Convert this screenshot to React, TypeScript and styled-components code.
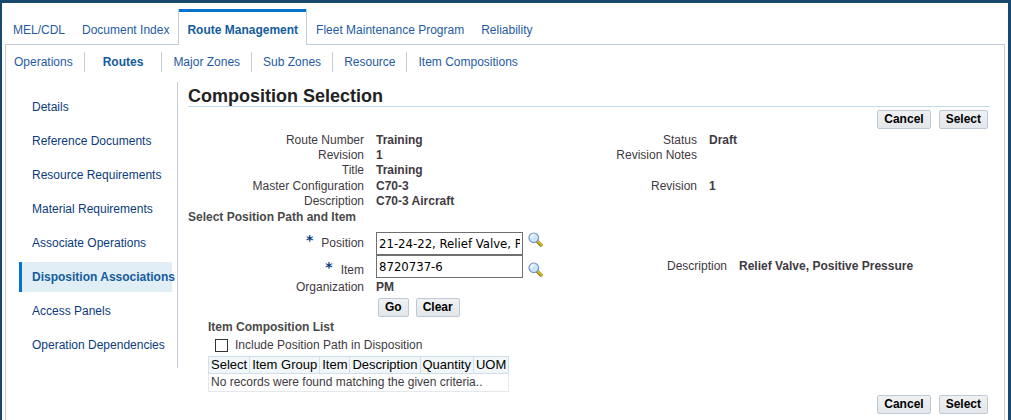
import React, { useState } from 'react';
import styled, { createGlobalStyle } from 'styled-components';

const color = {
  frame: '#17486d',
  line: '#c3cdd9',
  rule: '#c5d9e6',
  link: '#1f5ba3',
  linkActive: '#145c9e',
  sideLink: '#0b3b7c',
  accent: '#0572ce',
  text: '#3f3a42',
};

const GlobalStyle = createGlobalStyle`
  *, *::before, *::after { box-sizing: border-box; }
  body {
    margin: 0;
    background: #fff;
    color: ${color.text};
    font: 12px/15px "Liberation Sans", Arial, sans-serif;
  }
  a { text-decoration: none; }
`;

const Frame = styled.div`
  display: flex;
  flex-direction: column;
  min-height: 100vh;
  padding: 6px 3px 0;
  border: solid ${color.frame};
  border-width: 3px 3px 0 2px;
`;

const TabBar = styled.nav`
  display: flex;
  gap: 1px;
  height: 36px;
  margin-bottom: -1px;
`;

const Tab = styled.a<{ $active?: boolean }>`
  position: relative;
  display: flex;
  align-items: center;
  padding: 6px 8px 0;
  border: solid ${p => (p.$active ? color.line : 'transparent')};
  border-width: 0 ${p => (p.$active ? '1px' : '0')};
  background: ${p => (p.$active ? '#fff' : 'transparent')};
  color: ${p => (p.$active ? color.linkActive : color.link)};
  font-weight: ${p => (p.$active ? 700 : 400)};
  box-shadow: ${p => (p.$active ? `inset 0 3px ${color.accent}` : 'none')};
`;

const Panel = styled.div`
  flex: 1;
  border: solid ${color.line};
  border-width: 1px 1px 0;
`;

const SubTabBar = styled.nav`
  display: flex;
  height: 20px;
  margin: 7px 0 10px;
`;

const SubTab = styled.a<{ $active?: boolean }>`
  display: flex;
  align-items: center;
  padding: 0 ${p => (p.$active ? '18px' : '11px')};
  border-right: 1px solid ${color.line};
  color: ${p => (p.$active ? color.linkActive : color.link)};
  font-weight: ${p => (p.$active ? 700 : 400)};

  &:first-child { padding-left: 8px; }
  &:last-child { border-right: 0; }
`;

const Body = styled.div`
  display: flex;
  align-items: flex-start;
`;

const SideNav = styled.nav`
  display: flex;
  flex: none;
  flex-direction: column;
  gap: 4px;
  width: 172px;
  padding: 10px 5px 8px 13px;
  border-right: 1px solid ${color.line};
`;

const SideLink = styled.a<{ $active?: boolean }>`
  display: flex;
  align-items: center;
  height: 30px;
  padding-left: 10px;
  border-left: 3px solid ${p => (p.$active ? color.accent : 'transparent')};
  background: ${p => (p.$active ? '#e1eef6' : 'transparent')};
  color: ${p => (p.$active ? color.linkActive : color.sideLink)};
  font-weight: ${p => (p.$active ? 700 : 400)};
  white-space: nowrap;
`;

const Main = styled.main`
  flex: 1;
  min-width: 0;
  padding: 4px 14px 0 10px;
`;

const Title = styled.h1`
  margin: 0 0 3px;
  border-bottom: 1px solid ${color.rule};
  color: #222;
  font-size: 18px;
  line-height: 20px;
`;

const PageActions = styled.div`
  display: flex;
  justify-content: flex-end;
  gap: 8px;
  padding-right: 2px;
`;

const Button = styled.button`
  height: 19px;
  padding: 0 6px;
  border: 1px solid #bdcad6;
  border-radius: 2px;
  background: linear-gradient(#eff1f3, #e3e7ea);
  color: #000;
  font: bold 12px/15px "Liberation Sans", Arial, sans-serif;
`;

const Facts = styled.dl`
  display: grid;
  grid-template-columns: 176px 209px 100px 1fr;
  grid-template-rows: 15px 15px 16px 15px 15px;
  column-gap: 12px;
  margin: 4px 0 1px;
`;

const Term = styled.dt`
  grid-column: 1;
  text-align: right;
`;

const Detail = styled.dd`
  grid-column: 2;
  margin: 0;
  font-weight: 700;
`;

const SideTerm = styled(Term)`
  grid-column: 3;
`;

const SideDetail = styled(Detail)`
  grid-column: 4;
`;

const SectionTitle = styled.h2`
  margin: 0;
  color: #4a4a4a;
  font-size: 12px;
  line-height: 15px;
`;

const Form = styled.form`
  margin-top: 7px;
`;

type Align = 'start' | 'center' | 'end';

const FormRow = styled.div<{ $height: number }>`
  display: grid;
  grid-template-columns: 176px 239px 100px 1fr;
  column-gap: 12px;
  align-items: center;
  height: ${p => p.$height}px;
`;

const FieldLabel = styled.label<{ $align?: Align }>`
  align-self: ${p => p.$align ?? 'center'};
  text-align: right;
`;

const Required = styled.span`
  margin-right: 8px;
  color: ${color.sideLink};
  font-family: "DejaVu Sans", sans-serif;
  font-size: 14px;
  font-weight: 700;
  line-height: 0;
  vertical-align: 2px;
`;

const Control = styled.div`
  display: flex;
  gap: 5px;
`;

const TextInput = styled.input`
  width: 147px;
  height: 23px;
  padding: 0 2px;
  border: 1px solid #6f6f6f;
  background: #fff;
  color: #000;
  font: 13px "DejaVu Sans Condensed", "DejaVu Sans", Tahoma, sans-serif;
`;

const LookupButton = styled.button<{ $align: Align }>`
  display: flex;
  align-self: ${p => p.$align};
  padding: 0;
  border: 0;
  background: none;
`;

const Value = styled.output`
  font-weight: 700;
`;

const FormActions = styled.div`
  display: flex;
  gap: 7px;
  padding: 1px 0 3px 190px;
`;

const Results = styled.section`
  padding-left: 20px;
`;

const CheckRow = styled.label`
  display: flex;
  align-items: center;
  gap: 7px;
  height: 21px;
  padding-left: 7px;
`;

const Checkbox = styled.input`
  width: 13px;
  height: 13px;
  margin: 0;
  border: 1px solid #333;
  background: #fff;
  appearance: none;

  &:checked { background: ${color.accent}; }
`;

const Table = styled.table`
  margin: 0 0 3px;
  border-collapse: collapse;
  white-space: nowrap;
`;

const HeaderCell = styled.th`
  height: 17px;
  padding: 0 2px;
  border: 1px solid #cfe0ea;
  background: #f1f6f8;
  color: #000;
  font-size: 13px;
  font-weight: 400;
  line-height: 16px;
`;

const Cell = styled.td`
  height: 18px;
  padding: 0 2px;
  border: 1px solid #e2e8ec;
`;

const MagnifierIcon = () => (
  <svg width="16" height="16" viewBox="0 0 16 16" aria-hidden="true">
    <path d="M9 9 L14 14" stroke="#8f7a1c" strokeWidth="3.4" />
    <path d="M9.4 8.8 L14.6 14" stroke="#d3b92c" strokeWidth="2" />
    <circle cx="5.8" cy="5.8" r="4.8" fill="#c9e7fb" stroke="#7a93bd" strokeWidth="1.2" />
    <path d="M3 6 a3 3 0 0 1 3 -3" fill="none" stroke="#fff" strokeWidth="1.6" />
  </svg>
);

const tabs = ['MEL/CDL', 'Document Index', 'Route Management', 'Fleet Maintenance Program', 'Reliability'];
const subTabs = ['Operations', 'Routes', 'Major Zones', 'Sub Zones', 'Resource', 'Item Compositions'];
const sideLinks = [
  'Details',
  'Reference Documents',
  'Resource Requirements',
  'Material Requirements',
  'Associate Operations',
  'Disposition Associations',
  'Access Panels',
  'Operation Dependencies',
];
const columns = ['Select', 'Item Group', 'Item', 'Description', 'Quantity', 'UOM'];

const facts = [
  { term: 'Route Number', detail: 'Training', sideTerm: 'Status', sideDetail: 'Draft' },
  { term: 'Revision', detail: '1', sideTerm: 'Revision Notes', sideDetail: '' },
  { term: 'Title', detail: 'Training' },
  { term: 'Master Configuration', detail: 'C70-3', sideTerm: 'Revision', sideDetail: '1' },
  { term: 'Description', detail: 'C70-3 Aircraft' },
];

const Actions = () => (
  <PageActions>
    <Button type="button">Cancel</Button>
    <Button type="button">Select</Button>
  </PageActions>
);

export default function App() {
  const [position, setPosition] = useState('21-24-22, Relief Valve, Positive Pressure');
  const [item, setItem] = useState('8720737-6');

  return (
    <>
      <GlobalStyle />
      <Frame>
        <TabBar>
          {tabs.map(name => (
            <Tab key={name} href="#" $active={name === 'Route Management'}>{name}</Tab>
          ))}
        </TabBar>
        <Panel>
          <SubTabBar>
            {subTabs.map(name => (
              <SubTab key={name} href="#" $active={name === 'Routes'}>{name}</SubTab>
            ))}
          </SubTabBar>
          <Body>
            <SideNav>
              {sideLinks.map(name => (
                <SideLink key={name} href="#" $active={name === 'Disposition Associations'}>{name}</SideLink>
              ))}
            </SideNav>
            <Main>
              <Title>Composition Selection</Title>
              <Actions />
              <Facts>
                {facts.map(fact => (
                  <React.Fragment key={fact.term}>
                    <Term>{fact.term}</Term>
                    <Detail>{fact.detail}</Detail>
                    {fact.sideTerm && (
                      <>
                        <SideTerm>{fact.sideTerm}</SideTerm>
                        <SideDetail>{fact.sideDetail}</SideDetail>
                      </>
                    )}
                  </React.Fragment>
                ))}
              </Facts>
              <SectionTitle>Select Position Path and Item</SectionTitle>
              <Form onSubmit={e => e.preventDefault()}>
                <FormRow $height={23}>
                  <FieldLabel htmlFor="position"><Required>*</Required>Position</FieldLabel>
                  <Control>
                    <TextInput id="position" value={position} onChange={e => setPosition(e.target.value)} />
                    <LookupButton type="button" aria-label="Search positions" $align="start"><MagnifierIcon /></LookupButton>
                  </Control>
                </FormRow>
                <FormRow $height={23}>
                  <FieldLabel htmlFor="item" $align="end"><Required>*</Required>Item</FieldLabel>
                  <Control>
                    <TextInput id="item" value={item} onChange={e => setItem(e.target.value)} />
                    <LookupButton type="button" aria-label="Search items" $align="end"><MagnifierIcon /></LookupButton>
                  </Control>
                  <FieldLabel htmlFor="item-description">Description</FieldLabel>
                  <Value id="item-description">Relief Valve, Positive Pressure</Value>
                </FormRow>
                <FormRow $height={19}>
                  <FieldLabel htmlFor="organization">Organization</FieldLabel>
                  <Value id="organization">PM</Value>
                </FormRow>
                <FormActions>
                  <Button type="submit">Go</Button>
                  <Button type="reset">Clear</Button>
                </FormActions>
              </Form>
              <Results>
                <SectionTitle>Item Composition List</SectionTitle>
                <CheckRow>
                  <Checkbox type="checkbox" />
                  Include Position Path in Disposition
                </CheckRow>
                <Table>
                  <thead>
                    <tr>{columns.map(name => <HeaderCell key={name} scope="col">{name}</HeaderCell>)}</tr>
                  </thead>
                  <tbody>
                    <tr><Cell colSpan={columns.length}>No records were found matching the given criteria..</Cell></tr>
                  </tbody>
                </Table>
              </Results>
              <Actions />
            </Main>
          </Body>
        </Panel>
      </Frame>
    </>
  );
}
